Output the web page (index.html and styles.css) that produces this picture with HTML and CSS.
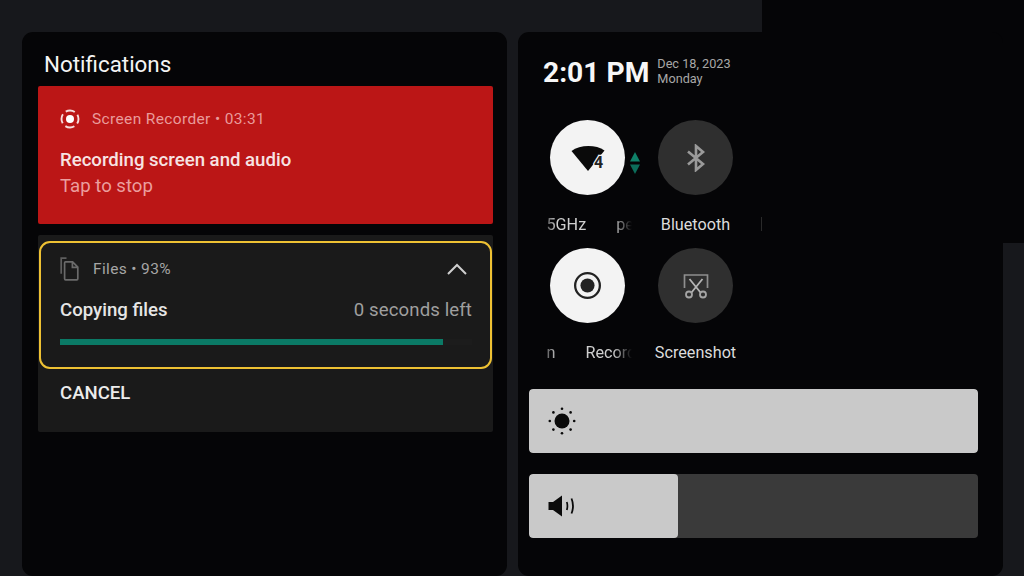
FILE: index.html
```html
<!DOCTYPE html>
<html lang="en">
<head>
<meta charset="utf-8">
<title>Notifications</title>
<link rel="stylesheet" href="styles.css">
</head>
<body>
<div class="screen">
  <div class="corner-patch"></div>
  <section class="panel notif-panel">
    <h1 class="panel-title">Notifications</h1>
    <article class="rec-card">
      <div class="rec-head">
        <svg class="rec-icon" viewBox="0 0 20 20" aria-hidden="true">
          <circle cx="10" cy="10" r="4" fill="#fff"/>
          <circle cx="10" cy="10" r="8.5" fill="none" stroke="#f6dcdc" stroke-width="1.9" stroke-dasharray="9.5 3.85" stroke-dashoffset="4.7"/>
        </svg>
        <span>Screen Recorder • 03:31</span>
      </div>
      <div class="rec-title">Recording screen and audio</div>
      <div class="rec-sub">Tap to stop</div>
    </article>
    <article class="files-card">
      <div class="files-focus">
        <div class="files-head">
          <svg class="files-icon" viewBox="0 0 20 24" aria-hidden="true">
            <path d="M6.5 1.2H1.2v15.6" fill="none" stroke="#5f5f5f" stroke-width="1.7"/>
            <path d="M5.6 4.8h7l5.2 5.4v11.6a1 1 0 0 1-1 1H5.6a1 1 0 0 1-1-1V5.8a1 1 0 0 1 1-1zM12.4 4.8v5.6h5.4" fill="none" stroke="#6a6a6a" stroke-width="1.7"/>
          </svg>
          <span class="files-meta">Files • 93%</span>
          <svg class="chevron" viewBox="0 0 20 12" aria-hidden="true">
            <path d="M1 11 10 2l9 9" fill="none" stroke="#cfcfcf" stroke-width="2"/>
          </svg>
        </div>
        <div class="files-row">
          <span class="files-title">Copying files</span>
          <span class="files-left">0 seconds left</span>
        </div>
        <div class="progress"><div class="progress-fill"></div></div>
      </div>
      <div class="cancel">CANCEL</div>
    </article>
  </section>
  <section class="panel qs-panel">
    <div class="clock-row">
      <div class="clock">2:01 PM</div>
      <div class="date"><div>Dec 18, 2023</div><div>Monday</div></div>
    </div>
    <div class="tiles">
      <div class="tile-cell">
        <div class="tile tile-on">
          <svg class="tile-icon" viewBox="0 0 36 28" aria-hidden="true">
            <path d="M1.500 7C10 .5 26 .5 34.500 6.500L18 27Z" fill="#0a0a0a"/>
            <text x="24" y="23.500" class="wifi-four">4</text>
          </svg>
        </div>
        <svg class="wifi-arrows" viewBox="0 0 10 22" aria-hidden="true">
          <path d="M5 0 10 9.500H0z" fill="#0f8068"/>
          <path d="M5 22 0 12.500H10z" fill="#0c6d5a"/>
        </svg>
        <div class="label label-clip"><span class="label-cut">5GHz</span><span>pe</span></div>
      </div>
      <div class="tile-cell">
        <div class="tile tile-off">
          <svg class="tile-icon-small" viewBox="0 0 20 28" aria-hidden="true">
            <path d="M2 7.500 17 20 10 26V2l7 6L2 20.500" fill="none" stroke="#9a9a9a" stroke-width="2.600"/>
          </svg>
        </div>
        <div class="label">Bluetooth</div>
        <div class="label-sliver"></div>
      </div>
      <div class="tile-cell">
        <div class="tile tile-on">
          <svg class="tile-icon-rec" viewBox="0 0 26 26" aria-hidden="true">
            <circle cx="13" cy="13" r="11.900" fill="none" stroke="#222" stroke-width="2.200"/>
            <circle cx="13" cy="13" r="6.800" fill="#222"/>
          </svg>
        </div>
        <div class="label label-clip"><span class="label-cut">n</span><span>Record</span></div>
      </div>
      <div class="tile-cell">
        <div class="tile tile-off">
          <svg class="tile-icon-shot" viewBox="0 0 26 26" aria-hidden="true">
            <path d="M1.500 15V2h23V15" fill="none" stroke="#8f8f8f" stroke-width="1.700"/>
            <path d="M6.500 6 17.500 19.500M19.500 6 8.500 19.500" fill="none" stroke="#b5b5b5" stroke-width="1.800"/>
            <circle cx="6" cy="21.500" r="3" fill="none" stroke="#a5a5a5" stroke-width="1.800"/>
            <circle cx="20" cy="21.500" r="3" fill="none" stroke="#a5a5a5" stroke-width="1.800"/>
          </svg>
        </div>
        <div class="label">Screenshot</div>
      </div>
    </div>
    <div class="sliders">
      <div class="slider">
        <div class="slider-fill slider-full">
          <svg class="slider-icon" viewBox="0 0 28 28" aria-hidden="true">
            <circle cx="14" cy="14" r="7.500" fill="#0a0a0a"/>
            <g fill="#0a0a0a">
              <circle cx="14" cy="1.800" r="1.300"/><circle cx="14" cy="26.200" r="1.300"/>
              <circle cx="1.800" cy="14" r="1.300"/><circle cx="26.200" cy="14" r="1.300"/>
              <circle cx="5.400" cy="5.400" r="1.300"/><circle cx="22.600" cy="5.400" r="1.300"/>
              <circle cx="5.400" cy="22.600" r="1.300"/><circle cx="22.600" cy="22.600" r="1.300"/>
            </g>
          </svg>
        </div>
      </div>
      <div class="slider">
        <div class="slider-fill slider-volume">
          <svg class="slider-icon" viewBox="0 0 28 28" aria-hidden="true">
            <path d="M0.500 10H5L14 3.500V24.500L5 18H0.500z" fill="#0a0a0a"/>
            <path d="M18.800 10c.8 2.500.8 5.500 0 8" fill="none" stroke="#0a0a0a" stroke-width="1.700"/>
            <path d="M23.500 6.500c1.800 4.500 1.800 10.500 0 15" fill="none" stroke="#0a0a0a" stroke-width="1.800"/>
          </svg>
        </div>
      </div>
    </div>
  </section>
</div>
</body>
</html>
```
FILE: styles.css
```css
* { box-sizing: border-box; }
html, body { margin: 0; padding: 0; }
body {
  width: 1024px;
  height: 576px;
  overflow: hidden;
  background: #17181c;
  font-family: Roboto, "Liberation Sans", sans-serif;
}
.screen {
  position: relative;
  display: flex;
  gap: 11px;
  width: 1024px;
  height: 576px;
  padding: 32px 0 0 22px;
  overflow: hidden;
}
.corner-patch {
  position: absolute;
  top: 0;
  left: 762px;
  width: 262px;
  height: 243px;
  background: #050507;
}
.panel {
  position: relative;
  width: 485px;
  height: 544px;
  background: #050507;
  border-radius: 11px;
}
.notif-panel { padding: 11px 14px 0 16px; }
.panel-title {
  margin: 0 0 0 6px;
  font-size: 22.400px;
  line-height: 42.500px;
  font-weight: 400;
  color: #f4f4f4;
}
.rec-card {
  height: 138.500px;
  padding: 21px 22px 0;
  background: #bb1616;
  border-radius: 2px;
}
.rec-head {
  display: flex;
  align-items: center;
  gap: 12px;
  height: 24px;
  font-size: 15.500px;
  color: #e99b9b;
  letter-spacing: .36px;
}
.rec-icon { width: 20px; height: 20px; flex: none; }
.rec-title {
  margin-top: 17px;
  font-size: 18.600px;
  line-height: 24px;
  font-weight: 500;
  color: #f7e3e3;
}
.rec-sub {
  margin-top: 2px;
  font-size: 18.600px;
  line-height: 24px;
  color: #eb9e9e;
}
.files-card {
  height: 197px;
  margin-top: 11px;
  padding: 6px 1px 0;
  background: #1a1a1a;
  border-radius: 2px;
}
.files-focus {
  height: 128px;
  padding: 0 18px 0 19px;
  border: 2px solid #eec133;
  border-radius: 11px;
}
.files-head {
  display: flex;
  align-items: center;
  height: 52px;
}
.files-icon { width: 20px; height: 24px; flex: none; margin-right: 13px; }
.files-meta {
  flex: 1;
  font-size: 15.500px;
  color: #a6a6a6;
  letter-spacing: .36px;
}
.chevron { width: 20px; height: 12px; margin-right: 5px; }
.files-row {
  display: flex;
  justify-content: space-between;
  align-items: center;
  height: 30px;
  font-size: 18.600px;
}
.files-title { font-weight: 500; color: #e6e6e6; }
.files-left { color: #9f9f9f; letter-spacing: .1px; }
.progress {
  height: 5.500px;
  margin-top: 14px;
  background: #1c1c1c;
}
.progress-fill { width: 93%; height: 100%; background: #0b7a66; }
.cancel {
  margin: 12px 0 0 21px;
  font-size: 18.600px;
  line-height: 24px;
  font-weight: 500;
  color: #ececec;
}
.qs-panel { padding: 0 26px 0 11px; }
.clock-row {
  display: flex;
  align-items: center;
  gap: 8px;
  height: 80px;
  padding: 0 0 0 14px;
}
.clock {
  font-size: 28.200px;
  font-weight: 700;
  color: #f7f7f7;
}
.date {
  font-size: 12.700px;
  line-height: 15px;
  color: #a8a8a8;
  margin-bottom: 2px;
}
.tiles {
  display: grid;
  grid-template-columns: 108px 108px;
  margin: 8px 0 0 4.500px;
}
.tile-cell {
  position: relative;
  display: flex;
  flex-direction: column;
  align-items: center;
  height: 128px;
}
.tile {
  display: flex;
  align-items: center;
  justify-content: center;
  width: 75px;
  height: 75px;
  border-radius: 50%;
}
.tile-on { background: #f3f3f3; }
.tile-off { background: #2f2f2f; }
.tile-icon { width: 36px; height: 28px; }
.wifi-four {
  font-family: Roboto, sans-serif;
  font-size: 16px;
  font-weight: 700;
  fill: #222;
  stroke: #f3f3f3;
  stroke-width: 2.500px;
  paint-order: stroke;
}
.wifi-arrows {
  position: absolute;
  top: 32px;
  left: 96px;
  width: 10px;
  height: 22px;
}
.tile-icon-small { width: 20px; height: 28px; }
.tile-icon-rec { width: 27px; height: 27px; }
.tile-icon-shot { width: 26px; height: 26px; }
.label {
  margin-top: 19.500px;
  height: 20px;
  font-size: 16.200px;
  line-height: 20px;
  color: #dcdcdc;
  white-space: nowrap;
}
.label-sliver {
  position: absolute;
  top: 97px;
  left: 119.500px;
  width: 1px;
  height: 14px;
  background: #2a2a2a;
}
.label-clip {
  display: flex;
  gap: 30px;
  align-self: flex-start;
  width: 85px;
  margin-left: 13px;
  overflow: hidden;
  color: #cfcfcf;
  -webkit-mask-image: linear-gradient(90deg, rgba(0,0,0,.45) 0, #000 10px, #000 66px, transparent 85px);
  mask-image: linear-gradient(90deg, rgba(0,0,0,.45) 0, #000 10px, #000 66px, transparent 85px);
}
.label-cut { flex: none; }
.sliders {
  display: flex;
  flex-direction: column;
  gap: 21px;
  margin-top: 12.500px;
}
.slider {
  height: 64px;
  width: 449px;
  background: #3a3a3a;
  border-radius: 4px;
  overflow: hidden;
}
.slider-fill {
  display: flex;
  align-items: center;
  height: 100%;
  padding-left: 19px;
  background: #c9c9c9;
  border-radius: 4px;
}
.slider-full { width: 100%; }
.slider-volume { width: 149px; }
.slider-icon { width: 28px; height: 28px; }
```
